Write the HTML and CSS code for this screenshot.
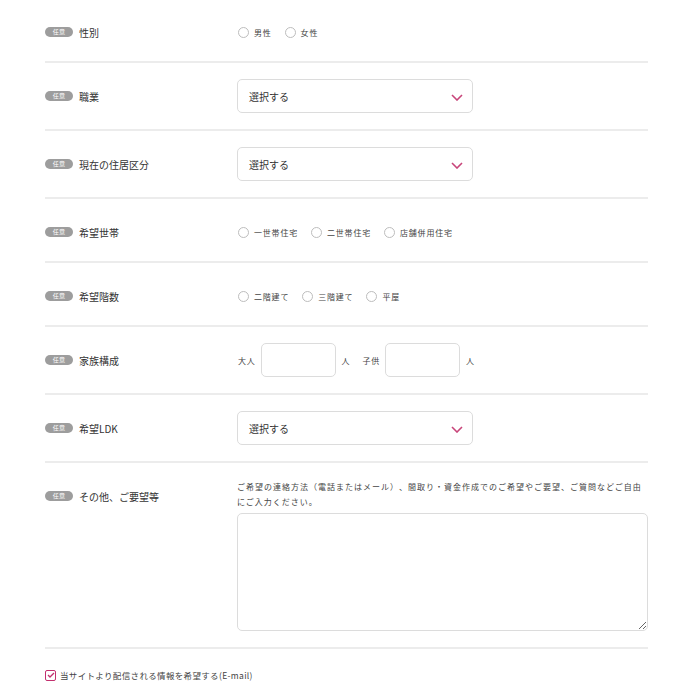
FILE: index.html
```html
<!DOCTYPE html>
<html lang="ja">
<head>
<meta charset="utf-8">
<link rel="stylesheet" href="styles.css">
</head>
<body>
<div class="form">
  <div class="row radio-row first">
    <div class="label"><span class="badge">任意</span><span class="label-text">性別</span></div>
    <div class="field radios">
      <label class="radio"><span class="circle"></span>男性</label>
      <label class="radio"><span class="circle"></span>女性</label>
    </div>
  </div>
  <div class="row">
    <div class="label"><span class="badge">任意</span><span class="label-text">職業</span></div>
    <div class="field">
      <div class="select">選択する<svg class="chev" width="12" height="7" viewBox="0 0 12 7"><path d="M1 1l5 5 5-5" fill="none" stroke="#c8457a" stroke-width="1.6"/></svg></div>
    </div>
  </div>
  <div class="row">
    <div class="label"><span class="badge">任意</span><span class="label-text">現在の住居区分</span></div>
    <div class="field">
      <div class="select">選択する<svg class="chev" width="12" height="7" viewBox="0 0 12 7"><path d="M1 1l5 5 5-5" fill="none" stroke="#c8457a" stroke-width="1.6"/></svg></div>
    </div>
  </div>
  <div class="row radio-row">
    <div class="label"><span class="badge">任意</span><span class="label-text">希望世帯</span></div>
    <div class="field radios">
      <label class="radio"><span class="circle"></span>一世帯住宅</label>
      <label class="radio"><span class="circle"></span>二世帯住宅</label>
      <label class="radio"><span class="circle"></span>店舗併用住宅</label>
    </div>
  </div>
  <div class="row radio-row">
    <div class="label"><span class="badge">任意</span><span class="label-text">希望階数</span></div>
    <div class="field radios">
      <label class="radio"><span class="circle"></span>二階建て</label>
      <label class="radio"><span class="circle"></span>三階建て</label>
      <label class="radio"><span class="circle"></span>平屋</label>
    </div>
  </div>
  <div class="row">
    <div class="label"><span class="badge">任意</span><span class="label-text">家族構成</span></div>
    <div class="field family">
      <span class="small">大人</span><span class="box"></span><span class="small unit">人</span>
      <span class="small">子供</span><span class="box"></span><span class="small unit">人</span>
    </div>
  </div>
  <div class="row">
    <div class="label"><span class="badge">任意</span><span class="label-text">希望LDK</span></div>
    <div class="field">
      <div class="select">選択する<svg class="chev" width="12" height="7" viewBox="0 0 12 7"><path d="M1 1l5 5 5-5" fill="none" stroke="#c8457a" stroke-width="1.6"/></svg></div>
    </div>
  </div>
  <div class="row top">
    <div class="label tall"><span class="badge">任意</span><span class="label-text">その他、ご要望等</span></div>
    <div class="field">
      <p class="desc">ご希望の連絡方法（電話またはメール）、間取り・資金作成でのご希望やご要望、ご質問などご自由にご入力ください。</p>
      <textarea class="textarea"></textarea>
    </div>
  </div>
  <div class="check-row">
    <span class="checkbox"><svg width="8" height="6" viewBox="0 0 8 6"><path d="M1 3l2 2 4-4" fill="none" stroke="#c2306e" stroke-width="1.3"/></svg></span>
    <span class="check-text">当サイトより配信される情報を希望する(E-mail)</span>
  </div>
</div>
</body>
</html>
```
FILE: styles.css
```css
* { box-sizing: border-box; }
body {
  margin: 0;
  padding: 0 52px 0 45px;
  background: #fff;
  font-family: "Noto Sans CJK JP", "Noto Sans", sans-serif;
  color: #333;
}
.row {
  display: flex;
  align-items: center;
  padding: 16px 0;
  border-bottom: 2px solid #ececec;
}
.row.radio-row { padding: 18px 0 14px; }
.row.radio-row.first { padding-top: 17px; }
.row.top { align-items: flex-start; }
.label {
  width: 192px;
  flex: none;
  display: flex;
  align-items: center;
}
.label.tall { height: 34px; }
.badge {
  display: inline-block;
  width: 28px;
  height: 10px;
  border-radius: 5px;
  background: #9d9d9d;
  color: #fff;
  font-size: 6px;
  line-height: 10px;
  text-align: center;
  letter-spacing: 0.05em;
}
.label-text {
  margin-left: 6px;
  font-size: 10px;
  color: #333;
}
.field { flex: 1; }
.radios {
  display: flex;
  align-items: center;
  height: 30px;
}
.radio {
  display: flex;
  align-items: center;
  font-size: 8px;
  letter-spacing: 0.1em;
  color: #444;
  margin-right: 12px;
}
.circle {
  width: 11px;
  height: 11px;
  border: 1px solid #bdbdbd;
  border-radius: 50%;
  margin-right: 5px;
  margin-left: 1px;
}
.select {
  width: 236px;
  height: 34px;
  border: 1px solid #dcdcdc;
  border-radius: 5px;
  display: flex;
  align-items: center;
  justify-content: space-between;
  padding: 0 9px 0 11px;
  font-size: 10px;
  color: #333;
}
.chev { margin-top: 2px; }
.family {
  display: flex;
  align-items: center;
}
.small {
  font-size: 8px;
  letter-spacing: 0.1em;
  color: #444;
  margin-left: 1px;
}
.box {
  width: 75px;
  height: 34px;
  border: 1px solid #dcdcdc;
  border-radius: 5px;
  margin: 0 5px;
}
.unit { margin-right: 11px; }
.desc {
  margin: 0;
  font-size: 8px;
  line-height: 15px;
  letter-spacing: 0.125em;
  text-spacing-trim: space-all;
  color: #444;
}
.textarea {
  display: block;
  width: 100%;
  height: 118px;
  margin-top: 4px;
  border: 1px solid #dcdcdc;
  border-radius: 5px;
  background: #fff;
  font-family: inherit;
}
.check-row {
  display: flex;
  align-items: center;
  padding: 20px 0;
}
.checkbox {
  width: 11px;
  height: 11px;
  border: 1px solid #c2306e;
  border-radius: 2px;
  display: flex;
  align-items: center;
  justify-content: center;
}
.check-text {
  margin-left: 4px;
  font-size: 8.5px;
  letter-spacing: 0.04em;
  color: #444;
}
```
